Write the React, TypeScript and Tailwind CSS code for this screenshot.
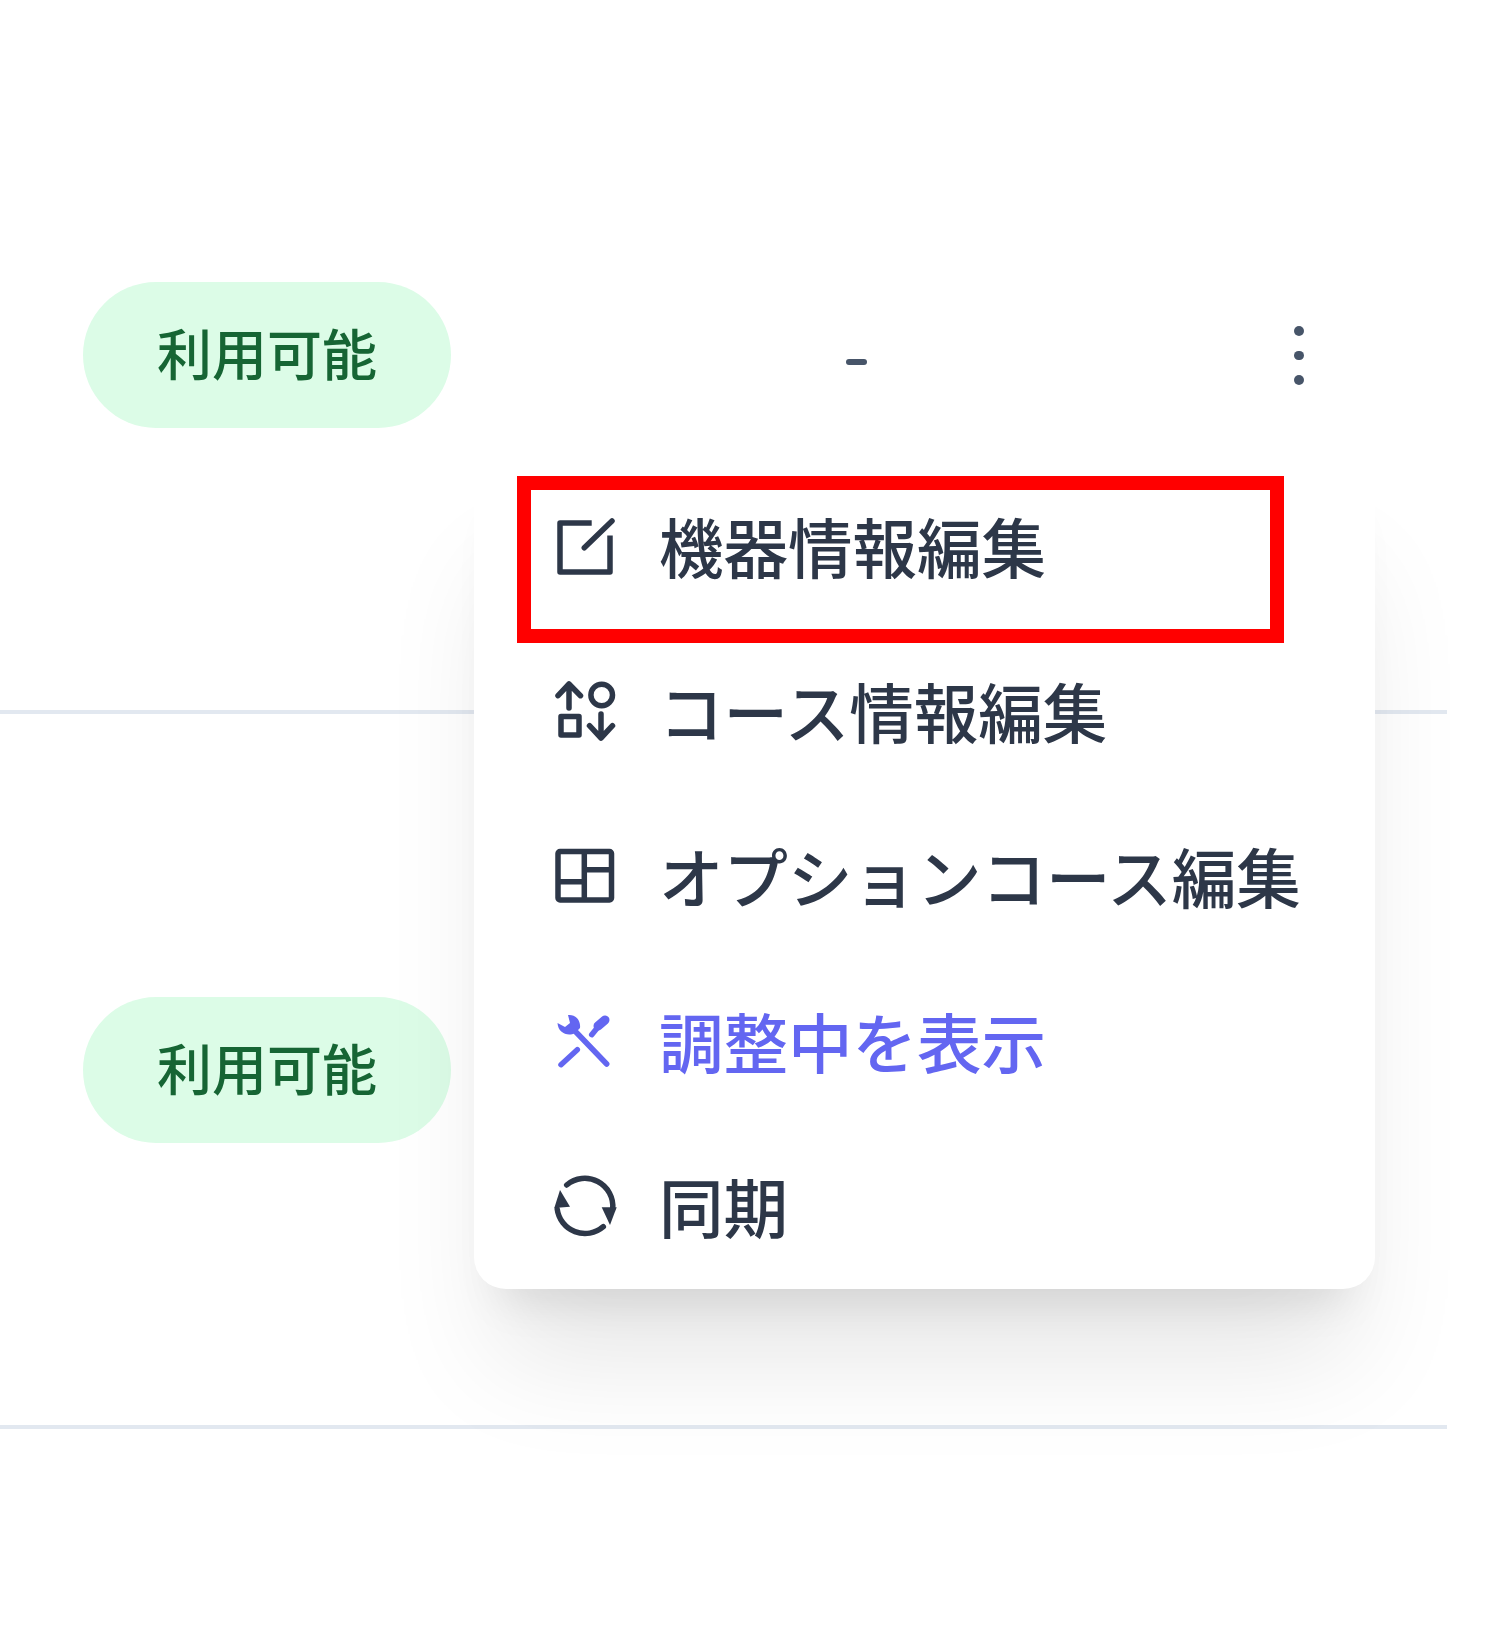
import React from 'react'

const FONT = { fontFamily: '"Noto Sans CJK JP", Inter, sans-serif' }

const ICON = 'w-[60px] h-[60px] shrink-0 overflow-visible'

function EditIcon() {
  return (
    <svg viewBox="0 0 60 60" className={ICON} fill="none" stroke="currentColor" strokeWidth="5.5" strokeLinejoin="round">
      <path d="M36.7 7H5V56H55V19.5" />
      <path d="M29.3 31.8L57 5" strokeLinecap="round" />
    </svg>
  )
}

function ShapesIcon() {
  return (
    <svg viewBox="0 0 60 60" className={ICON} fill="none" stroke="currentColor" strokeWidth="5.5" strokeLinecap="round" strokeLinejoin="round">
      <path d="M14 27V3M3 14.7L14 3L25.5 14.7" />
      <circle cx="46.7" cy="14" r="10.8" />
      <rect x="6" y="35.5" width="18" height="18.5" />
      <path d="M46 33V57M34.5 44.7L46 57L57.5 44.7" />
    </svg>
  )
}

function GridIcon() {
  return (
    <svg viewBox="0 0 60 60" className={ICON} fill="none" stroke="currentColor" strokeWidth="5.5" strokeLinejoin="round">
      <rect x="3" y="5.5" width="53.5" height="48.5" rx="2" />
      <path d="M29.3 5.5V54M3 35.7H29.3M29.3 23.7H56.5" />
    </svg>
  )
}

function ToolsIcon() {
  return (
    <svg viewBox="0 0 60 60" className={ICON} fill="none" stroke="currentColor" strokeWidth="5.5" strokeLinecap="round" strokeLinejoin="round">
      <path d="M13 4C20 3 26 9 25 17L20 22C13 26 3 22 2.5 12L10 16L15 12Z" fill="currentColor" stroke="none" />
      <path d="M20 20L51.7 53" />
      <path d="M6 53.7L22.3 38.7" />
      <path d="M36.7 23.7L43 16" />
      <path d="M43 15L50 9" strokeWidth="9" />
    </svg>
  )
}

function SyncIcon() {
  return (
    <svg viewBox="0 0 60 60" className={ICON} fill="none" stroke="currentColor" strokeWidth="5.5" strokeLinecap="round">
      <path d="M11.7 9A28 28 0 0 1 57.7 33" />
      <path d="M48.3 50.7A28 28 0 0 1 2.2 33" />
      <path d="M5 14L15 30.7L-0.7 32Z" fill="currentColor" stroke="none" />
      <path d="M46.7 31.3H61.7L55 49Z" fill="currentColor" stroke="none" />
    </svg>
  )
}

const MENU = [
  { label: '機器情報編集', Icon: EditIcon, color: 'text-[#2d3748]' },
  { label: 'コース情報編集', Icon: ShapesIcon, color: 'text-[#2d3748]' },
  { label: 'オプションコース編集', Icon: GridIcon, color: 'text-[#2d3748]' },
  { label: '調整中を表示', Icon: ToolsIcon, color: 'text-[#6366f1]' },
  { label: '同期', Icon: SyncIcon, color: 'text-[#2d3748]' },
]

function Row({ menu }: { menu?: boolean }) {
  return (
    <div className="relative h-[715px] border-b-4 border-[#e2e8f0] flex items-center pl-[83px]">
      <span className="w-[368px] h-[146px] pb-[6px] rounded-full bg-[#dcfce7] text-[#166534] text-[55px] font-medium flex items-center justify-center">
        利用可能
      </span>
      {menu && (
        <>
          <span className="absolute left-[846px] top-[360px] w-[21px] h-[6px] rounded-sm bg-[#475569]" />
          <div className="absolute left-[1294px] top-[327px] flex flex-col gap-[15px]">
            <span className="w-[9.5px] h-[9.5px] rounded-full bg-[#475569]" />
            <span className="w-[9.5px] h-[9.5px] rounded-full bg-[#475569]" />
            <span className="w-[9.5px] h-[9.5px] rounded-full bg-[#475569]" />
          </div>
        </>
      )}
    </div>
  )
}

export default function App() {
  return (
    <div className="relative w-[1489px] h-[1627px] overflow-hidden bg-white" style={FONT}>
      <div className="w-[1447px] -mt-[1px]">
        <Row menu />
        <Row />
      </div>
      <div className="absolute left-[474px] top-[463px] w-[901px] h-[826px] rounded-[32px] bg-white shadow-[0_91px_114px_-23px_rgba(0,0,0,0.1),0_37px_46px_-27px_rgba(0,0,0,0.1)]">
        {MENU.map(({ label, Icon, color }) => (
          <div key={label} className={`h-[165px] flex items-center pl-[81px] gap-[44px] text-[64.5px] font-medium ${color}`}>
            <Icon />
            <span className="leading-none whitespace-nowrap">{label}</span>
          </div>
        ))}
      </div>
      <div className="absolute left-[517px] top-[476px] w-[767px] h-[167px] border-[14px] border-[#ff0000]" />
    </div>
  )
}
